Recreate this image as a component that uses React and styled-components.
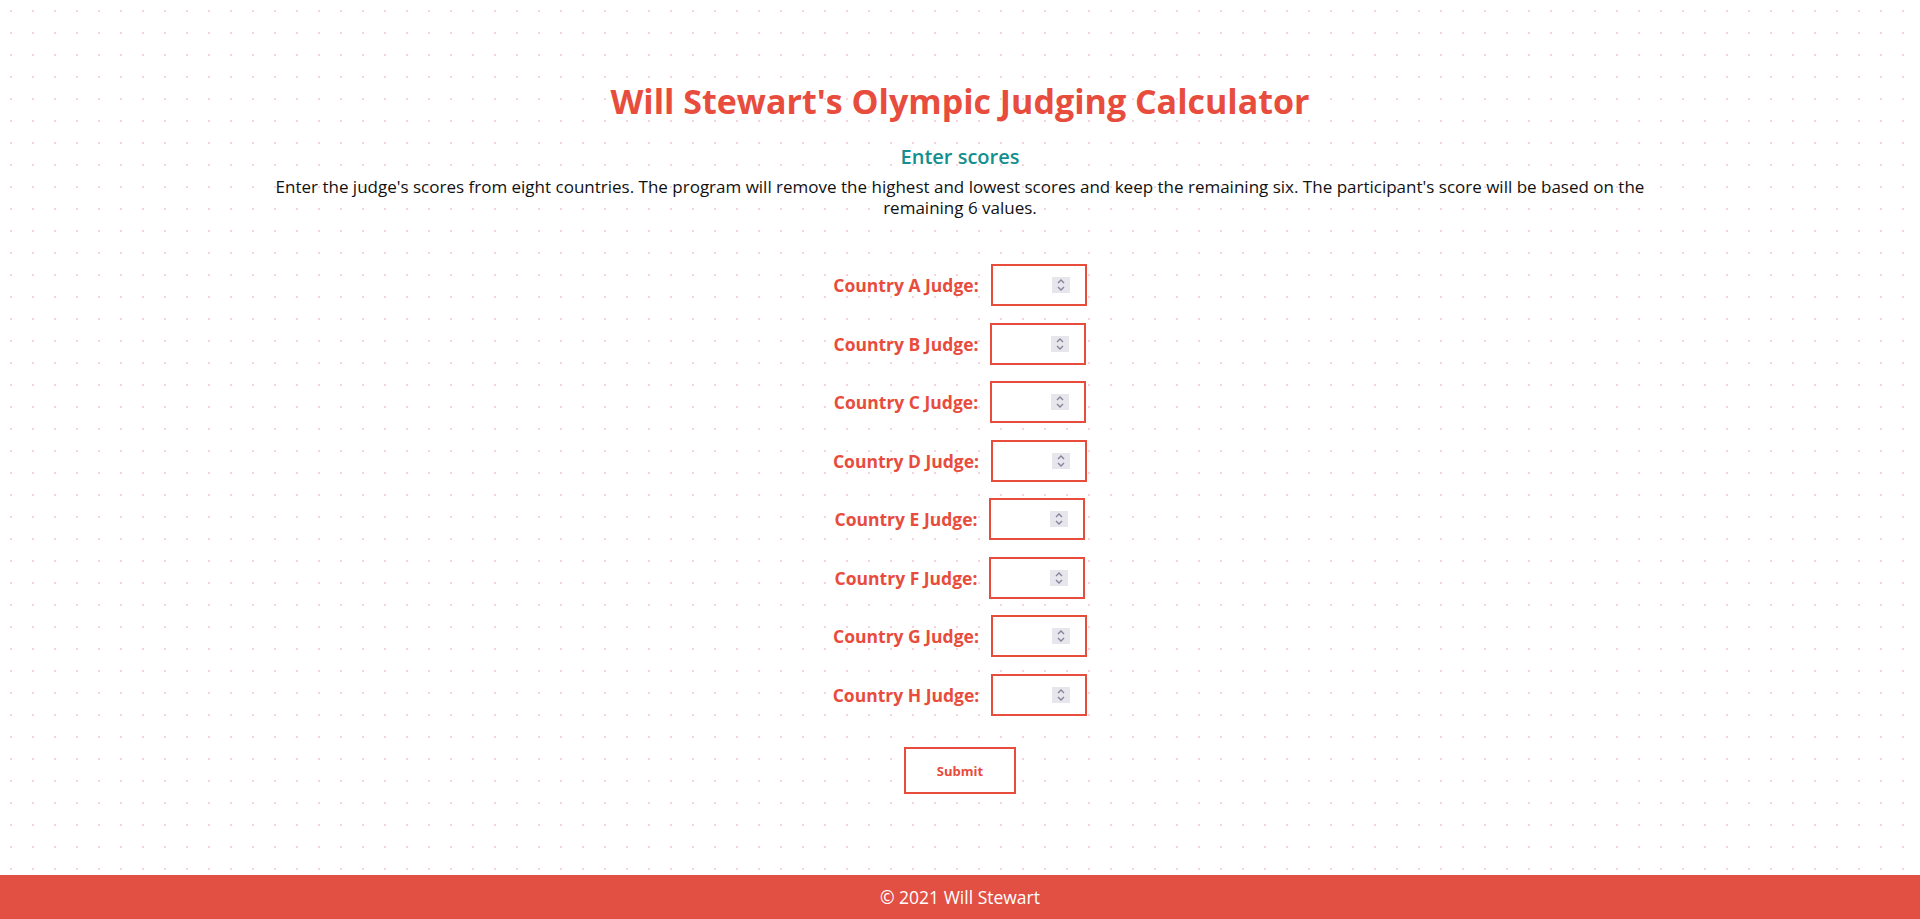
import React, { useState } from "react";
import styled, { createGlobalStyle } from "styled-components";

const GlobalStyle = createGlobalStyle`
  html, body {
    margin: 0;
    padding: 0;
  }
  body {
    font-family: "Open Sans", "Liberation Sans", sans-serif;
    background-color: #ffffff;
    background-image: radial-gradient(circle, #f6d3e0 1px, transparent 1.3px);
    background-size: 22px 22px;
  }
`;

const countries = ["A", "B", "C", "D", "E", "F", "G", "H"];

export default function App() {
  const [scores, setScores] = useState({});

  const handleChange = (key) => (event) => {
    setScores({ ...scores, [key]: event.target.value });
  };

  return (
    <Page>
      <GlobalStyle />
      <Main>
        <Title>Will Stewart's Olympic Judging Calculator</Title>
        <Subtitle>Enter scores</Subtitle>
        <Intro>
          Enter the judge's scores from eight countries. The program will remove the highest and lowest scores and keep
          the remaining six. The participant's score will be based on the remaining 6 values.
        </Intro>
        <Form onSubmit={(e) => e.preventDefault()}>
          {countries.map((c) => (
            <Row key={c}>
              <Label htmlFor={"judge" + c}>Country {c} Judge:</Label>
              <InputBox>
                <Input
                  id={"judge" + c}
                  inputMode="decimal"
                  value={scores[c] || ""}
                  onChange={handleChange(c)}
                />
                <Spinner>
                  <svg width="12" height="14" viewBox="0 0 12 14" fill="none" stroke="#85859a" strokeWidth="1.4">
                    <path d="M3 5 L6 2 L9 5" />
                    <path d="M3 9 L6 12 L9 9" />
                  </svg>
                </Spinner>
              </InputBox>
            </Row>
          ))}
          <Submit type="submit">Submit</Submit>
        </Form>
      </Main>
      <Footer>© 2021 Will Stewart</Footer>
    </Page>
  );
}

const Page = styled.div`
  min-height: 919px;
  display: flex;
  flex-direction: column;
`;

const Main = styled.main`
  flex: 1;
  display: flex;
  flex-direction: column;
  align-items: center;
  padding-top: 78px;
`;

const Title = styled.h1`
  margin: 0;
  color: #e74c3c;
  font-size: 34px;
  font-weight: 700;
  line-height: 46px;
`;

const Subtitle = styled.h2`
  margin: 20px 0 0;
  color: #138f8f;
  font-size: 20px;
  font-weight: 600;
  line-height: 26px;
`;

const Intro = styled.p`
  margin: 6px 0 0;
  max-width: 1400px;
  text-align: center;
  color: #111;
  font-size: 17px;
  line-height: 21px;
`;

const Form = styled.form`
  display: flex;
  flex-direction: column;
  align-items: center;
  margin-top: 46px;
`;

const Row = styled.div`
  display: flex;
  align-items: center;
  gap: 12px;
  margin-bottom: 16.5px;
`;

const Label = styled.label`
  color: #e74c3c;
  font-size: 17.5px;
  font-weight: 700;
`;

const InputBox = styled.div`
  width: 92px;
  height: 38px;
  border: 2px solid #e74c3c;
  display: flex;
  align-items: center;
  background: #fff;
`;

const Input = styled.input`
  flex: 1;
  min-width: 0;
  height: 100%;
  border: none;
  outline: none;
  background: transparent;
  padding: 0 6px;
  font-family: inherit;
  font-size: 15px;
`;

const Spinner = styled.span`
  width: 18px;
  height: 16px;
  margin-right: 15px;
  background: #e6e6ec;
  display: flex;
  align-items: center;
  justify-content: center;
`;

const Submit = styled.button`
  margin-top: 15px;
  width: 112px;
  height: 47px;
  border: 2px solid #e74c3c;
  background: #fff;
  color: #e74c3c;
  font-family: inherit;
  font-size: 13px;
  font-weight: 700;
  cursor: pointer;
`;

const Footer = styled.footer`
  height: 44px;
  background: #e24f43;
  color: #fff;
  display: flex;
  align-items: center;
  justify-content: center;
  font-size: 17.5px;
`;
